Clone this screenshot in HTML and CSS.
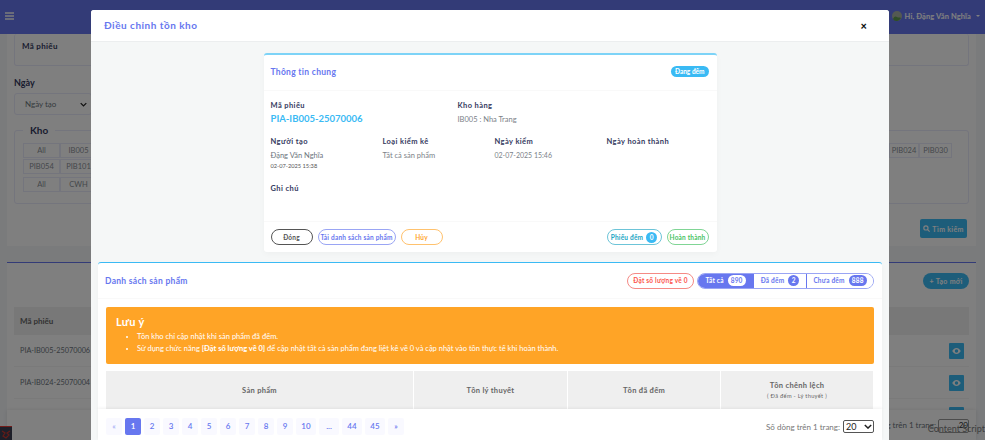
FILE: index.html
```html
<!DOCTYPE html>
<html lang="en">
<head>
    <meta charset="UTF-8">
    <meta name="viewport" content="width=device-width, initial-scale=1.0">
    <title>Điều chỉnh tồn kho</title>
    <link rel="stylesheet" href="styles.css">
</head>
<body>
    <div class="page">
        <div class="topbar">
            <div class="hamburger"><span></span><span></span><span></span></div>
            <div class="user">
                <svg class="avatar" width="10" height="10" viewBox="0 0 10 10"><circle cx="5" cy="5" r="5" fill="#a9b3a5"/><path d="M1 8c1-3 3-3 4-2s3 0 4 1c-1 2-3 3-4 3S2 10 1 8z" fill="#5f9a4f"/></svg>
                <span>Hi, Đặng Văn Nghĩa</span>
                <i class="caret"></i>
            </div>
        </div>

        <div class="panel filter-panel">
            <div class="field-box">Mã phiếu</div>
            <div class="bg-label">Ngày</div>
            <div class="bg-select">Ngày tạo <svg width="7" height="5" viewBox="0 0 10 6" fill="none" stroke="#222" stroke-width="1.8"><path d="M1 1l4 4 4-4"/></svg></div>
            <div class="kho-box">
                <div class="kho-title">Kho</div>
                <div class="chip-row">
                    <span>All</span><span>IB005</span>
                    <span class="chip-push">PIB024</span><span class="chip-end">PIB030</span>
                </div>
                <div class="chip-row"><span>PIB054</span><span>PIB101</span></div>
                <div class="chip-row chip-row-gap"><span>All</span><span>CWH</span></div>
            </div>
            <div class="search-row">
                <div class="bg-btn search-btn">
                    <svg width="7" height="7" viewBox="0 0 12 12" fill="none" stroke="currentColor" stroke-width="2"><circle cx="5" cy="5" r="3.6"/><path d="M8 8l3.4 3.4"/></svg>
                    Tìm kiếm
                </div>
            </div>
        </div>

        <div class="panel list-panel">
            <div class="list-head"><div class="bg-btn add-btn"><b>+</b> Tạo mới</div></div>
            <div class="list-thead">Mã phiếu</div>
            <div class="list-row"><span>PIA-IB005-25070006</span><i class="eye-btn"><svg width="9" height="6" viewBox="0 0 20 14"><path d="M10 0C5 0 2 4 0 7c2 3 5 7 10 7s8-4 10-7c-2-3-5-7-10-7zm0 11a4 4 0 110-8 4 4 0 010 8z" fill="currentColor"/></svg></i></div>
            <div class="list-row"><span>PIA-IB024-25070004</span><i class="eye-btn"><svg width="9" height="6" viewBox="0 0 20 14"><path d="M10 0C5 0 2 4 0 7c2 3 5 7 10 7s8-4 10-7c-2-3-5-7-10-7zm0 11a4 4 0 110-8 4 4 0 010 8z" fill="currentColor"/></svg></i></div>
            <div class="list-row"><span></span><i class="eye-btn"></i></div>
        </div>

        <div class="bg-footer">g trên 1 trang: <span class="bg-page-select">20</span></div>
        <div class="debug-tab"><svg width="10" height="10" viewBox="0 0 10 10" fill="none" stroke="#c9362f" stroke-width="1.2"><path d="M1 2l3 2-2 3 3 2 3-3-2-2 3-2"/></svg></div>

        <div class="overlay">
            <div class="modal">
                <div class="modal-header">
                    <h5>Điều chỉnh tồn kho</h5>
                    <span class="close">×</span>
                </div>
                <div class="modal-body">
                    <div class="card info-card">
                        <div class="card-head info-head">
                            <h4>Thông tin chung</h4>
                            <span class="status">Đang đếm</span>
                        </div>
                        <div class="info-body">
                            <div class="info-row first-row">
                                <div>
                                    <div class="lbl">Mã phiếu</div>
                                    <div class="code">PIA-IB005-25070006</div>
                                </div>
                                <div>
                                    <div class="lbl">Kho hàng</div>
                                    <div class="val">IB005 : Nha Trang</div>
                                </div>
                            </div>
                            <div class="info-row second-row">
                                <div>
                                    <div class="lbl">Người tạo</div>
                                    <div class="val dark">Đặng Văn Nghĩa</div>
                                    <div class="time">02-07-2025 15:38</div>
                                </div>
                                <div>
                                    <div class="lbl">Loại kiểm kê</div>
                                    <div class="val">Tất cả sản phẩm</div>
                                </div>
                                <div>
                                    <div class="lbl">Ngày kiểm</div>
                                    <div class="val num">02-07-2025 15:46</div>
                                </div>
                                <div>
                                    <div class="lbl">Ngày hoàn thành</div>
                                </div>
                            </div>
                            <div class="lbl">Ghi chú</div>
                        </div>
                        <div class="card-foot">
                            <div class="btn-set">
                                <button class="pill btn-dark">Đóng</button>
                                <button class="pill btn-primary">Tải danh sách sản phẩm</button>
                                <button class="pill btn-warn">Hủy</button>
                            </div>
                            <div class="btn-set">
                                <button class="pill btn-info">Phiếu đếm <em class="count">0</em></button>
                                <button class="pill btn-success">Hoàn thành</button>
                            </div>
                        </div>
                    </div>

                    <div class="card product-card">
                        <div class="card-head product-head">
                            <h4>Danh sách sản phẩm</h4>
                            <div class="btn-set">
                                <button class="pill btn-danger">Đặt số lượng về 0</button>
                                <div class="tabs">
                                    <button class="tab active">Tất cả <em class="count">890</em></button>
                                    <button class="tab">Đã đếm <em class="count">2</em></button>
                                    <button class="tab">Chưa đếm <em class="count">888</em></button>
                                </div>
                            </div>
                        </div>
                        <div class="product-body">
                            <div class="alert">
                                <div class="alert-title">Lưu ý</div>
                                <ul>
                                    <li>Tồn kho chỉ cập nhật khi sản phẩm đã đếm.</li>
                                    <li>Sử dụng chức năng <b>[Đặt số lượng về 0]</b> để cập nhật tất cả sản phẩm đang liệt kê về 0 và cập nhật vào tồn thực tế khi hoàn thành.</li>
                                </ul>
                            </div>
                            <div class="thead">
                                <div>Sản phẩm</div>
                                <div>Tồn lý thuyết</div>
                                <div>Tồn đã đếm</div>
                                <div>Tồn chênh lệch<small>( Đã đếm - Lý thuyết )</small></div>
                            </div>
                        </div>
                    </div>
                </div>
                <div class="pager-bar">
                    <div class="pager">
                        <a class="muted">«</a><a class="on">1</a><a>2</a><a>3</a><a>4</a><a>5</a><a>6</a><a>7</a><a>8</a><a>9</a><a class="wide">10</a><a class="wide">...</a><a class="wide">44</a><a class="wide">45</a><a>»</a>
                    </div>
                    <div class="per-page">Số dòng trên 1 trang:
                        <div class="page-select">20 <svg width="8" height="5" viewBox="0 0 10 6" fill="none" stroke="#222" stroke-width="1.8"><path d="M1 1l4 4 4-4"/></svg></div>
                    </div>
                </div>
            </div>
        </div>
        <div class="script-tag">Content Script</div>
    </div>
</body>
</html>
```

FILE: styles.css
```css
* {
    box-sizing: border-box;
}

body {
    margin: 0;
    font-family: "Lato", "Noto Sans", sans-serif;
    color: #6c757d;
}

.page {
    position: relative;
    width: 985px;
    height: 440px;
    overflow: hidden;
    background: #f4f6f9;
    font-size: 8px;
}

/* page behind the modal */
.topbar {
    height: 34px;
    background: #6777ef;
    display: flex;
    align-items: center;
    justify-content: space-between;
    padding: 0 5px 2px 5px;
    color: #fff;
}

.hamburger span {
    display: block;
    width: 9px;
    height: 1.5px;
    margin: 1.5px 0;
    background: #d5d9f5;
}

.user {
    display: flex;
    align-items: center;
    gap: 3px;
    font-size: 7.5px;
    font-weight: 700;
    letter-spacing: .1px;
}

.caret {
    width: 0;
    height: 0;
    margin-left: 2px;
    margin-top: 2px;
    border: 2px solid transparent;
    border-top-color: #fff;
}

.panel {
    margin: 0 9px 0 7px;
    background: #fff;
    padding: 0 7px;
}

.filter-panel {
    height: 212px;
}

.field-box {
    height: 32px;
    padding: 7px;
    border: 1px solid #e9eafa;
    border-top: 0;
    border-radius: 3px;
    font-weight: 700;
    letter-spacing: .3px;
    color: #34395e;
}

.bg-label {
    margin-top: 11px;
    font-size: 9px;
    font-weight: 700;
    color: #34395e;
}

.bg-select {
    display: flex;
    justify-content: space-between;
    align-items: center;
    width: 78px;
    height: 22px;
    margin-top: 5px;
    padding: 0 4px 0 10px;
    border: 1px solid #e9eafa;
    border-radius: 3px;
}

.kho-box {
    position: relative;
    height: 74px;
    margin-top: 15px;
    padding: 12px 8px;
    border: 1px solid #e9eafa;
    border-radius: 3px;
}

.kho-title {
    position: absolute;
    top: -7px;
    left: 8px;
    padding: 0 7px;
    background: #fff;
    font-size: 10px;
    font-weight: 700;
    color: #34395e;
}

.chip-row {
    display: flex;
    margin-bottom: 1px;
}

.chip-row span {
    width: 37px;
    height: 15px;
    line-height: 14px;
    text-align: center;
    border: 1px solid #e9eafa;
    font-size: 7.5px;
    color: #8a8f96;
}

.chip-row .chip-push {
    margin-left: auto;
    width: 30px;
}

.chip-row .chip-end {
    width: 33px;
    margin-right: 8px;
}

.chip-row-gap {
    margin-top: 3px;
}

.search-row {
    display: flex;
    justify-content: flex-end;
    padding: 15px 2px 0 0;
}

.bg-btn {
    display: flex;
    align-items: center;
    justify-content: center;
    gap: 2px;
    color: #fff;
    background: #3abaf4;
    font-size: 7px;
    font-weight: 700;
    letter-spacing: .3px;
}

.search-btn {
    width: 47px;
    height: 19px;
    border-radius: 2px;
}

.list-panel {
    height: 178px;
    margin-top: 16px;
    border-top: 1.5px solid #6777ef;
    position: relative;
}

.list-head {
    display: flex;
    justify-content: flex-end;
    padding-top: 10px;
    height: 44px;
}

.add-btn {
    width: 46px;
    height: 16px;
    border-radius: 8px;
}

.list-thead {
    height: 28px;
    line-height: 28px;
    padding-left: 6px;
    background: #f0f0f0;
    font-weight: 700;
    color: #666;
}

.list-row {
    display: flex;
    justify-content: space-between;
    align-items: center;
    height: 32px;
    padding: 0 5px 0 6px;
    border-bottom: 1px solid #f4f4f4;
    font-size: 7.3px;
}

.eye-btn {
    display: flex;
    align-items: center;
    justify-content: center;
    width: 15px;
    height: 16px;
    background: #3abaf4;
    color: #fff;
    border-radius: 1px;
}

.bg-footer {
    position: absolute;
    left: 7px;
    right: 9px;
    top: 410px;
    height: 30px;
    padding: 9px 7px 0 0;
    text-align: right;
    background: #fff;
    box-shadow: 0 0 4px rgba(0, 0, 0, .1);
}

.bg-page-select {
    display: inline-block;
    width: 31px;
    height: 14px;
    padding-left: 3px;
    border: 1px solid #999;
    border-radius: 2px;
    color: #222;
}

.debug-tab {
    position: absolute;
    left: 0;
    top: 426px;
    width: 12px;
    height: 14px;
    padding: 2px 1px;
    background: #3b3f52;
    border-top: 1px solid #e53935;
}

.script-tag {
    position: absolute;
    top: 423px;
    right: 0;
    color: #3d3d3d;
    font-size: 9px;
}

/* modal */
.overlay {
    position: absolute;
    inset: 0;
    padding: 10px 5px 0 0;
    background: rgba(0, 0, 0, .5);
    display: flex;
    justify-content: center;
}

.modal {
    width: 798px;
    height: 430px;
    display: flex;
    flex-direction: column;
    background: #f5f7f7;
    border-radius: 3px 3px 0 0;
}

.modal-header {
    height: 32px;
    flex: none;
    display: flex;
    align-items: center;
    justify-content: space-between;
    padding: 0 22px 1px 13px;
    background: #fff;
    border-bottom: 1px solid #eceeef;
    border-radius: 3px 3px 0 0;
}

.modal-header h5 {
    margin: 0;
    font-size: 10px;
    font-weight: 700;
    letter-spacing: .5px;
    color: #6777ef;
}

.close {
    font-size: 11px;
    font-weight: 900;
    color: #111;
}

.modal-body {
    flex: 1;
    min-height: 0;
    overflow: hidden;
    padding: 11px 7px 0;
}

.card {
    background: #fff;
    border-radius: 3px;
    box-shadow: 0 2px 6px rgba(0, 0, 0, .03);
}

.info-card {
    width: 453px;
    height: 199px;
    margin: 0 auto;
    border-top: 2px solid #7dd3f7;
    display: flex;
    flex-direction: column;
}

.card-head {
    display: flex;
    justify-content: space-between;
    align-items: center;
    height: 36px;
    padding: 0 8px 0 7px;
    border-bottom: 1px solid #f9f9f9;
}

.info-head {
    padding-bottom: 2px;
}

.card-head h4 {
    margin: 0;
    font-size: 8.5px;
    font-weight: 700;
    letter-spacing: .3px;
    color: #6777ef;
}

.status {
    height: 11px;
    line-height: 11px;
    padding: 0 4px;
    border-radius: 6px;
    background: #3abaf4;
    color: #fff;
    font-size: 6.5px;
    font-weight: 700;
}

.info-body {
    flex: 1;
    padding: 9px 8px 0 7px;
}

.info-row {
    display: grid;
}

.first-row {
    grid-template-columns: 187px 1fr;
    height: 36px;
}

.second-row {
    grid-template-columns: repeat(4, 112px);
    height: 47px;
}

.lbl {
    height: 11px;
    line-height: 11px;
    font-size: 7.5px;
    font-weight: 700;
    letter-spacing: .4px;
    color: #34395e;
}

.code {
    margin-top: 2px;
    font-size: 9.5px;
    font-weight: 700;
    color: #3abaf4;
}

.val {
    margin-top: 4px;
    font-size: 7.5px;
    color: #7b8288;
}

.val.dark {
    color: #6c757d;
}

.val.num {
    font-size: 7px;
}

.time {
    margin-top: 2px;
    font-size: 5.7px;
    color: #555;
}

.card-foot {
    display: flex;
    justify-content: space-between;
    align-items: center;
    height: 31px;
    padding: 0 8px 0 7px;
    border-top: 1px solid #f9f9f9;
}

.btn-set {
    display: flex;
    align-items: center;
    gap: 5px;
}

.pill {
    display: flex;
    align-items: center;
    justify-content: center;
    gap: 3px;
    height: 16px;
    padding: 0 2px;
    border: 1px solid;
    border-radius: 8px;
    background: #fff;
    font-family: inherit;
    font-size: 6.5px;
    font-weight: 700;
    letter-spacing: .2px;
    white-space: nowrap;
}

.btn-dark {
    width: 42px;
    color: #555;
    border-color: #555;
}

.btn-primary {
    width: 78px;
    color: #6777ef;
    border-color: #9aa5f4;
}

.btn-warn {
    width: 42px;
    color: #ffa426;
    border-color: #ffc26e;
}

.btn-info {
    width: 55px;
    color: #1aa5c4;
    border-color: #6cc4d8;
}

.btn-success {
    width: 42px;
    color: #47c363;
    border-color: #80d595;
}

.btn-danger {
    width: 67px;
    color: #fc544b;
    border-color: #f58a85;
}

.count {
    display: inline-block;
    min-width: 11px;
    height: 11px;
    line-height: 11px;
    padding: 0 3px;
    border-radius: 6px;
    font-style: normal;
    text-align: center;
    background: #3abaf4;
    color: #fff;
}

.product-card {
    margin-top: 10px;
    border-top: 1.5px solid #3abaf4;
}

.product-head {
    height: 36px;
}

.product-body {
    padding: 8px;
}

.tabs {
    display: flex;
    margin-left: -2px;
    height: 16px;
    border: 1px solid #9aa5f4;
    border-radius: 8px;
    overflow: hidden;
}

.tab {
    display: flex;
    align-items: center;
    justify-content: center;
    gap: 4px;
    height: 100%;
    padding: 0;
    border: 0;
    border-left: 1px solid #6777ef;
    background: #fff;
    color: #6777ef;
    font-family: inherit;
    font-size: 6.5px;
    font-weight: 700;
    letter-spacing: .2px;
}

.tab:nth-child(1) {
    width: 55px;
    border-left: 0;
}

.tab:nth-child(2) {
    width: 53px;
}

.tab:nth-child(3) {
    width: 67px;
}

.tab .count {
    background: #6777ef;
}

.tab.active {
    background: #6777ef;
    color: #fff;
}

.tab.active .count {
    background: #fff;
    color: #6777ef;
}

.alert {
    height: 57px;
    padding: 8px 10px;
    border-radius: 2px;
    background: #ffa426;
    color: #fff;
    font-size: 7.5px;
}

.alert-title {
    font-size: 11px;
    font-weight: 700;
    letter-spacing: .3px;
}

.alert ul {
    margin: 3px 0 0;
    padding-left: 21px;
}

.alert li {
    line-height: 12px;
}

.thead {
    display: grid;
    grid-template-columns: 308px 154px 153px 153px;
    height: 60px;
    margin-top: 7px;
    background: #efefef;
    font-size: 7.5px;
    font-weight: 700;
    letter-spacing: .3px;
    color: #666;
}

.thead > div {
    height: 38px;
    display: flex;
    flex-direction: column;
    align-items: center;
    justify-content: center;
    border-right: 1px solid #fff;
}

.thead small {
    margin-top: 2px;
    font-size: 5.7px;
    font-weight: 400;
}

.pager-bar {
    flex: none;
    display: flex;
    justify-content: space-between;
    height: 31px;
    margin: 0 7px;
    padding: 9px 8px 0;
    background: #fff;
    box-shadow: 0 -1px 3px rgba(0, 0, 0, .06);
}

.pager {
    display: flex;
    gap: 3px;
    height: 17px;
}

.pager a {
    width: 16px;
    line-height: 17px;
    text-align: center;
    border-radius: 2px;
    background: #f9f9ff;
    color: #6777ef;
    font-size: 8px;
    font-weight: 600;
}

.pager a.wide {
    width: 20px;
}

.pager a.muted {
    color: #a5aef5;
}

.pager a.on {
    background: #6777ef;
    color: #fff;
}

.per-page {
    display: flex;
    gap: 3px;
    height: 13px;
    align-items: center;
    margin-top: 2px;
    font-size: 8px;
    color: #777;
}

.page-select {
    display: flex;
    justify-content: space-between;
    align-items: center;
    width: 31px;
    height: 13px;
    padding: 0 1px 0 2px;
    border: 1px solid #555;
    border-radius: 2px;
    color: #222;
    font-size: 9px;
}
```
